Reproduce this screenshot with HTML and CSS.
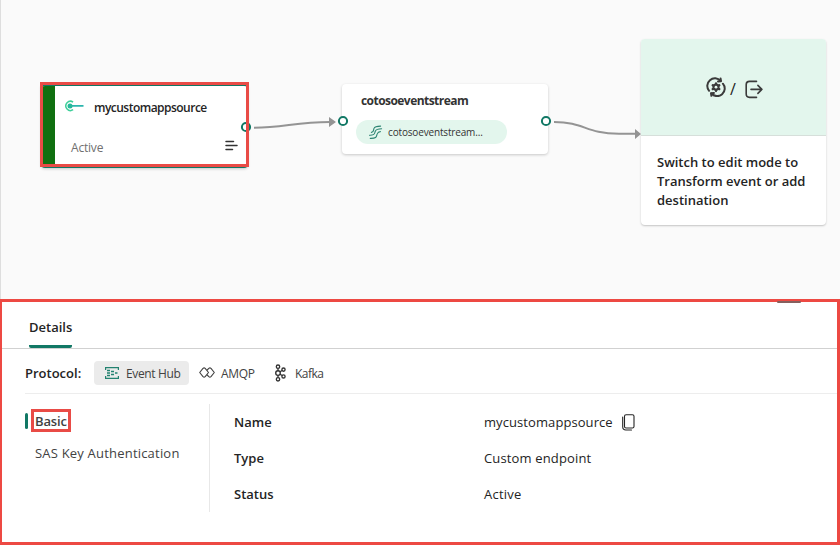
FILE: index.html
```html
<!DOCTYPE html>
<html lang="en">
<head>
<meta charset="utf-8">
<title>Eventstream</title>
<link rel="stylesheet" href="styles.css">
</head>
<body>
<main class="app">
  <section class="canvas">
    <article class="node source">
      <div class="stripe"></div>
      <div class="source-body">
        <div class="source-head">
          <svg class="source-icon" width="20" height="12" viewBox="0 0 20 12" fill="none"><path d="M9.1 2.1A4.6 4.6 0 1 0 9.1 9.7" stroke="#3fcf9a" stroke-width="1.5"/><path d="M6 5.9H19.5" stroke="#2bb5ad" stroke-width="1.6"/><circle cx="6" cy="5.9" r="2.5" fill="#25b99b"/></svg>
          <span class="t-source">mycustomappsource</span>
        </div>
        <div class="source-foot">
          <span class="t-state">Active</span>
          <svg class="menu" width="13" height="11" viewBox="0 0 13 11" stroke="#333" stroke-width="1.5" stroke-linecap="round"><path d="M1 1.5H8.5M1 5.5H12M1 9.5H7.5"/></svg>
        </div>
      </div>
    </article>
    <article class="node stream">
      <h3 class="t-stream">cotosoeventstream</h3>
      <div class="chip">
        <svg width="15" height="15" viewBox="0 0 15 15" fill="none" stroke="#2b8472" stroke-width="1.1" stroke-linecap="round"><path d="M3.4 7.4C6 7.4 5.2 5.4 6 3.4C6.8 1.4 8.5 1.1 12.6 1.1"/><path d="M1.5 10.2C7.4 10.4 6.4 8 7.4 6C8.3 4.1 9.8 3.8 13.6 3.8"/><path d="M2.3 13.4C9.4 13.6 8.3 11 9.2 8.9C9.9 7.1 10.8 6.6 12.4 6.6"/></svg>
        <span class="t-chip">cotosoeventstream...</span>
      </div>
    </article>
    <article class="node target">
      <div class="target-top">
        <svg width="20" height="20" viewBox="0 0 20 20" fill="none" stroke="#3b3b3b" stroke-width="2" stroke-linecap="round" stroke-linejoin="round"><path d="M3.1 13.8A7.5 7.5 0 0 1 14.6 4M16.9 6.7A7.5 7.5 0 0 1 5.5 16.5"/><path d="M14.6 1.6L15 4.2L12 4.5M5.4 18.8L5 16.2L8 15.9"/><path d="M10 6.4V14M6.7 8.3L13.3 12.1M13.3 8.3L6.7 12.1" stroke-width="2.3"/><circle cx="10" cy="10.2" r="2.6" fill="#3b3b3b"/><circle cx="10" cy="10.2" r="1.4" fill="#e3f6ed" stroke="none"/></svg>
        <span class="slash">/</span>
        <svg class="exit" width="19" height="19" viewBox="0 0 19 19" fill="none" stroke="#3b3b3b" stroke-width="1.6" stroke-linecap="round" stroke-linejoin="round"><path d="M11.5 1.4H4.5Q1.2 1.4 1.2 4.7V14.1Q1.2 17.4 4.5 17.4H11.5M6 9.4H16.9M12.9 5.4L16.9 9.4L12.9 13.4"/></svg>
      </div>
      <p class="target-text">Switch to edit mode to<br>Transform event or add<br>destination</p>
    </article>
    <svg class="wires" width="840" height="299" viewBox="0 0 840 299" fill="none">
      <path d="M254 127.7C284 127.7 295 122 330 122M554 122C585 122 585 133.7 619 133.7H636" stroke="#949494" stroke-width="2"/>
      <path d="M329 117L336 122L329 127ZM635 129L641 134L635 139Z" fill="#949494"/>
      <g fill="#fff" stroke="#117865" stroke-width="2"><circle cx="246" cy="127" r="4.1"/><circle cx="343" cy="121" r="4.1"/><circle cx="546" cy="121" r="4.1"/></g>
    </svg>
    <div class="highlight"></div>
  </section>

  <section class="panel">
    <div class="handle"></div>
    <nav class="tabs"><span class="tab"><span class="t-details">Details</span></span></nav>
    <div class="protocols">
      <span class="t-protocol">Protocol:</span>
      <div class="option selected">
        <svg width="14" height="12" viewBox="0 0 14 12" fill="none" stroke="#238270" stroke-width="1.2"><path d="M.6 3V.7H13.4V3M.6 9V11.3H13.4V9"/><path d="M2 3.5H5M2 6H5M2 8.5H5M6 4.5H9M6 7.5H9M10 6H12.5" stroke-width="1.7"/></svg>
        <span class="t-hub">Event Hub</span>
      </div>
      <div class="option amqp">
        <svg width="16" height="11" viewBox="0 0 16 11" fill="none" stroke="#424242" stroke-width="1.1" stroke-linejoin="round"><path d="M.7 5.5L4 1.3Q5.1.3 6.2 1.3L9.5 5.5L6.2 9.7Q5.1 10.7 4 9.7ZM8.2 3L9.8 1.3Q10.9.3 12 1.3L15.3 5.5L12 9.7Q10.9 10.7 9.8 9.7L8.2 8"/></svg>
        <span class="t-amqp">AMQP</span>
      </div>
      <div class="option kafka">
        <svg width="12" height="18" viewBox="0 0 12 18" fill="none" stroke="#333" stroke-width="1.35"><circle cx="4" cy="2.7" r="1.7"/><circle cx="4" cy="9" r="2.3"/><circle cx="4" cy="15.3" r="1.7"/><circle cx="9.5" cy="5.6" r="1.6"/><circle cx="9.5" cy="12.4" r="1.6"/><path d="M4 4.4V6.7M4 11.3V13.6M6 7.8L8.1 6.5M6 10.2L8.1 11.5"/></svg>
        <span class="t-kafka">Kafka</span>
      </div>
    </div>
    <div class="details">
      <nav class="side">
        <div class="side-item"><span class="marker"></span><span class="boxed"><span class="t-basic">Basic</span></span></div>
        <div class="side-item second"><span class="t-sas">SAS Key Authentication</span></div>
      </nav>
      <dl class="props">
        <dt><span class="t-name">Name</span></dt>
        <dd><span class="t-value">mycustomappsource</span><svg width="13" height="17" viewBox="0 0 13 17" fill="none" stroke="#242424" stroke-width="1.1" stroke-linecap="round"><rect x="2.5" y=".7" width="9.5" height="13.3" rx="1.6"/><path d="M.7 3V12.8Q.7 16 3.9 16H9.5"/></svg></dd>
        <dt><span class="t-type">Type</span></dt>
        <dd><span class="t-endpoint">Custom endpoint</span></dd>
        <dt><span class="t-status">Status</span></dt>
        <dd><span class="t-active">Active</span></dd>
      </dl>
    </div>
  </section>
</main>
</body>
</html>
```
FILE: styles.css
```css
* { box-sizing: border-box; }
body { margin: 0; background: #fff; color: #242424; font-family: "Open Sans", "Noto Sans", sans-serif; font-size: 13px; }
.app { width: 840px; height: 545px; display: flex; flex-direction: column; overflow: hidden; }
span, h3 { white-space: nowrap; }
svg { flex: none; }
h3, p, dl, dd { margin: 0; }

.canvas { position: relative; height: 299px; flex: none; background: #fafafa; border-left: 1px solid #dedede; }
.node { position: absolute; background: #fff; border-radius: 4px; box-shadow: 0 1px 3px rgba(0, 0, 0, .2); }
.source { left: 40px; top: 84px; width: 207px; height: 84px; display: flex; overflow: hidden; border-top: 2px solid #117865; border-bottom: 1px solid #117865; }
.stripe { width: 14px; background: #107010; }
.source-body { flex: 1; padding: 11px 10px 0 10px; }
.source-head { display: flex; align-items: center; gap: 9px; height: 20px; }
.source-icon { margin: -2px 0 0 -1px; }
.t-source { margin-left: 1px; }
.source-foot { display: flex; align-items: center; justify-content: space-between; height: 20px; margin: 20px 0 0 6px; color: #707070; }
.menu { margin-top: -3px; }
.stream { left: 341px; top: 84px; width: 206px; height: 70px; padding: 8px 14px; }
.t-stream { margin-left: 5px; line-height: 18px; }
.chip { display: flex; align-items: center; gap: 5px; width: 151px; height: 24px; margin-top: 10px; padding-left: 12px; border-radius: 12px; background: #e3f6ed; }
.target { left: 640px; top: 39px; width: 185px; height: 186px; overflow: hidden; box-shadow: 0 1px 2px rgba(0, 0, 0, .22); }
.target-top { display: flex; align-items: center; height: 97px; padding-left: 65px; background: #e3f6ed; border-bottom: 1px solid #d6dfda; }
.slash { margin: 3px 0 0 4px; font-size: 16px; }
.exit { margin: 4px 0 0 9px; }
.target-text { padding: 17px 0 0 16px; font-size: 13px; line-height: 19px; font-weight: 600; white-space: nowrap; }
.wires { position: absolute; left: -1px; top: 0; }
.highlight { position: absolute; left: 39px; top: 82px; width: 209px; height: 85px; border: 3px solid #e94b46; }

.panel { position: relative; flex: 1; border: 3px solid #ed4943; border-left-width: 2px; }
.handle { position: absolute; left: 775px; top: -1px; width: 24px; height: 2px; border-radius: 1px; background: #85605e; }
.tabs { display: flex; height: 47px; padding-left: 27px; border-bottom: 1px solid #d1d1d1; }
.tab { display: flex; align-items: center; width: 43px; height: 46px; padding-top: 7px; border-bottom: 3px solid #117865; border-radius: 0 0 2px 2px; }
.protocols { display: flex; align-items: center; height: 45px; margin-left: 23px; padding-top: 3px; border-bottom: 1px solid #ededed; }
.t-protocol { width: 69px; }
.option { display: flex; align-items: center; height: 24px; color: #424242; }
.option span { padding-top: 2px; }
.selected { width: 95px; padding-left: 11px; gap: 7px; border-radius: 4px; background: #ebebeb; }
.amqp { width: 75px; margin-left: 10px; gap: 6px; }
.kafka { gap: 9px; }
.details { display: flex; padding: 10px 0 0 23px; }
.side { width: 185px; height: 108px; border-right: 1px solid #e8e8e8; padding-top: 5px; }
.side-item { display: flex; align-items: center; height: 23px; color: #424242; }
.marker { width: 3px; height: 16px; border-radius: 2px; background: #117865; }
.boxed { display: flex; align-items: center; width: 40px; height: 23px; margin-left: 3px; padding-left: 1px; border: 3px solid #e94b46; }
.second { margin-top: 9px; padding-left: 10px; }
.props { display: grid; grid-template-columns: 250px 1fr; grid-auto-rows: 36px; padding-left: 24px; }
.props dt, .props dd { display: flex; align-items: center; gap: 9px; }

.t-source { font-size: 12px; font-weight: 600; letter-spacing: -.52px; }
.t-state { font-size: 12px; letter-spacing: -.2px; }
.t-stream { font-size: 12px; font-weight: 700; letter-spacing: -.55px; color: #333; }
.t-chip { font-size: 10px; font-weight: 500; letter-spacing: -.16px; color: #333; }
.t-details, .t-protocol, .t-basic, .t-name, .t-type, .t-status { font-weight: 600; }
.t-basic { letter-spacing: -.15px; }
.t-hub { font-size: 12px; letter-spacing: -.35px; }
.t-amqp { font-size: 12px; letter-spacing: -.35px; }
.t-kafka { font-size: 12px; letter-spacing: -.5px; }
.t-sas { letter-spacing: .2px; }
.t-value { letter-spacing: .08px; }
.t-endpoint { letter-spacing: .15px; }
.t-active { letter-spacing: .25px; }
```
